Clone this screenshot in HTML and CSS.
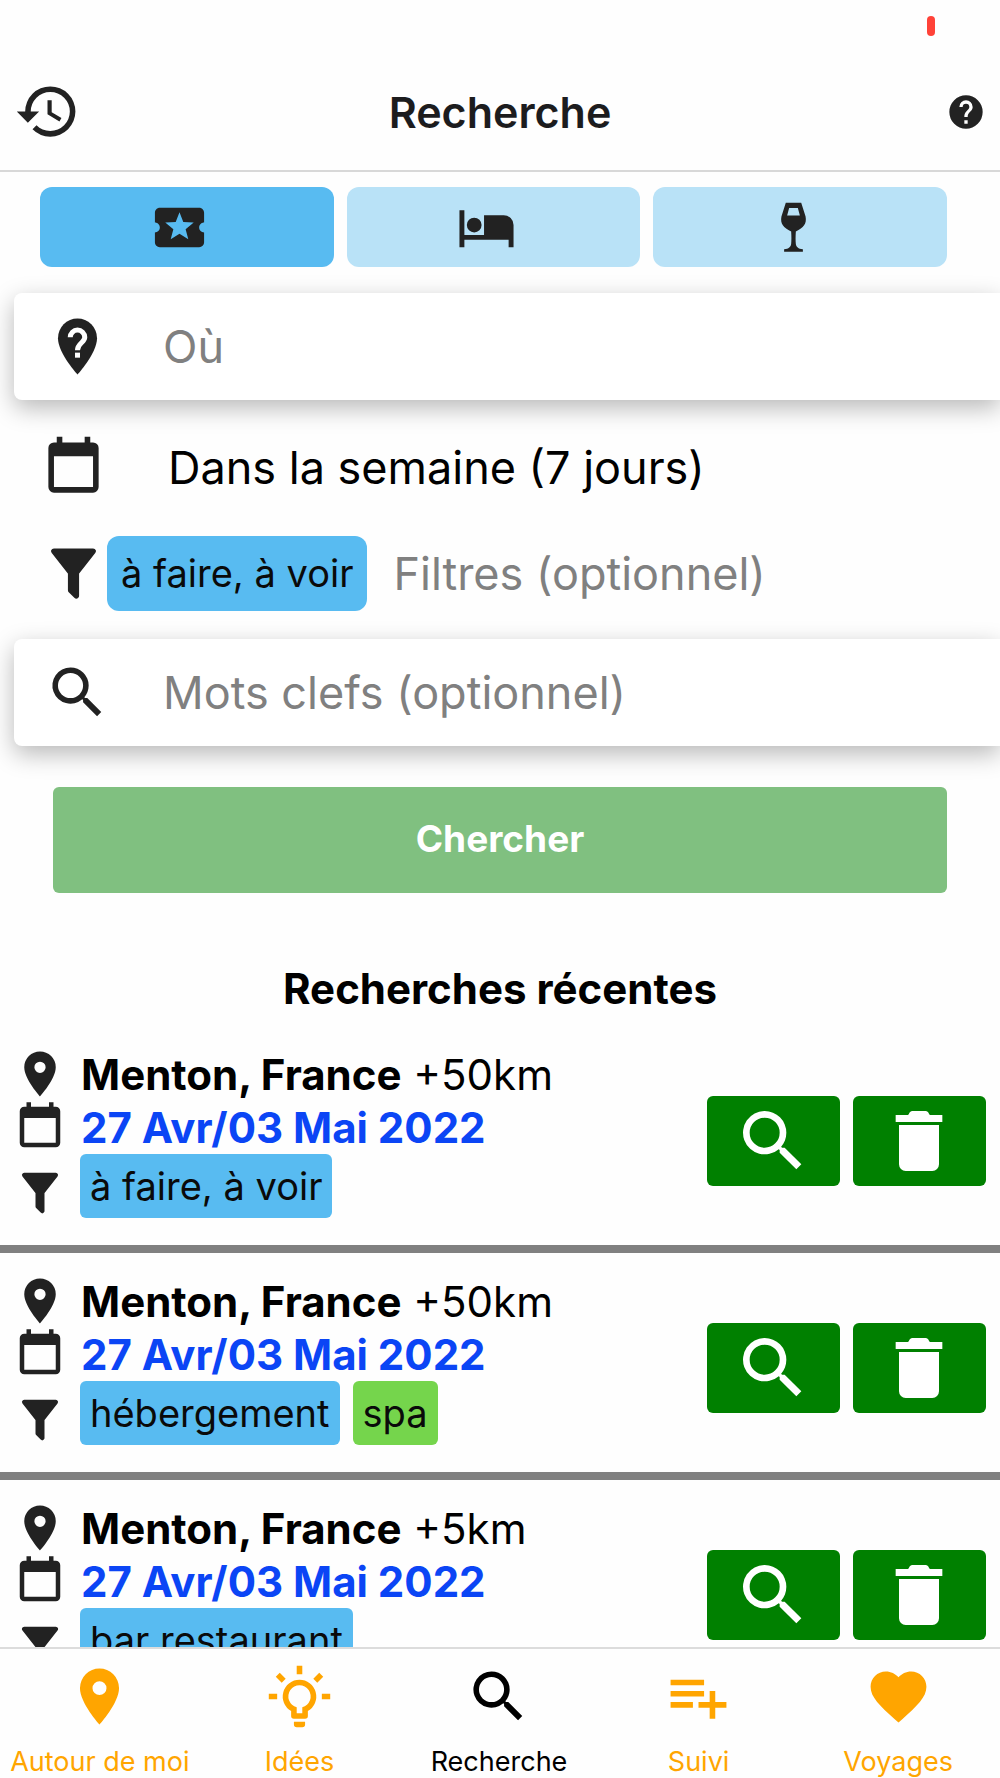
FILE: index.html
```html
<!DOCTYPE html>
<html lang="fr">
<head>
<meta charset="utf-8">
<meta name="viewport" content="width=device-width, initial-scale=1">
<title>Recherche</title>
<link rel="stylesheet" href="styles.css">
</head>
<body>
<svg class="sprite" aria-hidden="true">
  <symbol id="i-history" viewBox="0 0 24 24"><path d="M13.5 8H12v5l4.28 2.54.72-1.21-3.5-2.08V8M13 3a9 9 0 0 0-9 9H1l3.96 4.03L9 12H6a7 7 0 1 1 7 7c-1.93 0-3.68-.79-4.94-2.06l-1.42 1.42A8.9 8.9 0 0 0 13 21a9 9 0 0 0 0-18"/></symbol>
  <symbol id="i-help" viewBox="0 0 24 24"><path d="M12 2a10 10 0 1 0 0 20 10 10 0 0 0 0-20zm1 17h-2v-2h2v2zm2.07-7.75l-.9.92C13.45 12.9 13 13.5 13 15h-2v-.5c0-1.1.45-2.1 1.17-2.83l1.24-1.26c.37-.36.59-.86.59-1.41a2 2 0 0 0-4 0H8a4 4 0 0 1 8 0c0 .88-.36 1.68-.93 2.25z"/></symbol>
  <symbol id="i-ticket" viewBox="0 0 24 24"><path d="M20 12c0-1.1.9-2 2-2V6c0-1.1-.9-2-2-2H4c-1.1 0-2 .9-2 2v4c1.1 0 2 .9 2 2s-.9 2-2 2v4c0 1.1.9 2 2 2h16c1.1 0 2-.9 2-2v-4c-1.1 0-2-.9-2-2zm-4.42 4.8L12 14.5l-3.58 2.3 1.08-4.12-3.29-2.69 4.24-.25L12 5.8l1.54 3.95 4.24.25-3.29 2.69 1.09 4.11z"/></symbol>
  <symbol id="i-bed" viewBox="0 0 24 24"><path d="M19 7h-8v8H3V5H1v15h2v-3h18v3h2v-9a4 4 0 0 0-4-4M7 14a3 3 0 1 0 0-6 3 3 0 0 0 0 6"/></symbol>
  <symbol id="i-wine" viewBox="0 0 176 176"><path fill-rule="evenodd" d="M65 14h46l13 41c4 22-6 33-29 45-1 16-1 26 0 37 1 9 7 14 21 16v7H60v-7c14-2 20-7 21-16 1-11 1-21 0-37-23-12-33-23-29-45zM75 30l-6 22h38l-6-22z"/></symbol>
  <symbol id="i-pin-help" viewBox="0 0 24 24"><path d="M12 2a7 7 0 0 0-7 7c0 5.3 7 13 7 13s7-7.7 7-13a7 7 0 0 0-7-7z"/><path class="knock-line" d="M9.4 8.7a2.6 2.6 0 1 1 5.2 0c0 1.9-2.6 2.1-2.6 4.6"/><path class="knock" d="M11.1 14.2h1.8V16h-1.8z"/></symbol>
  <symbol id="i-pin" viewBox="0 0 24 24"><path d="M12 11.5a2.5 2.5 0 1 1 0-5 2.5 2.5 0 0 1 0 5M12 2a7 7 0 0 0-7 7c0 5.25 7 13 7 13s7-7.75 7-13a7 7 0 0 0-7-7z"/></symbol>
  <symbol id="i-calendar" viewBox="0 0 24 24"><path d="M19 19H5V8h14m-3-7v2H8V1H6v2H5a2 2 0 0 0-2 2v14a2 2 0 0 0 2 2h14a2 2 0 0 0 2-2V5a2 2 0 0 0-2-2h-1V1"/></symbol>
  <symbol id="i-filter" viewBox="0 0 24 24"><path d="M14 12v7.88c.04.3-.06.62-.29.83a1 1 0 0 1-1.41 0l-2.01-2.01a.99.99 0 0 1-.29-.83V12h-.03L4.21 4.62a1 1 0 0 1 .17-1.4c.19-.14.4-.22.62-.22h14c.22 0 .43.08.62.22a1 1 0 0 1 .17 1.4L14.03 12z"/></symbol>
  <symbol id="i-search" viewBox="0 0 24 24"><path d="M9.5 3A6.5 6.5 0 0 1 16 9.5c0 1.61-.59 3.09-1.56 4.23l.27.27h.79l5 5-1.5 1.5-5-5v-.79l-.27-.27A6.5 6.5 0 1 1 9.5 3m0 2a4.5 4.5 0 1 0 0 9 4.5 4.5 0 0 0 0-9z"/></symbol>
  <symbol id="i-trash" viewBox="0 0 24 24"><path d="M19 4.2h-3.6c-.5 0-.4-1.2-1.4-1.2h-4c-1 0-.9 1.2-1.4 1.2H5v2.1h14M6 7.2V19a2 2 0 0 0 2 2h8a2 2 0 0 0 2-2V7.2z"/></symbol>
  <symbol id="i-bulb" viewBox="0 0 24 24"><path d="M20 11h3v2h-3zM1 11h3v2H1zM13 1v3h-2V1zM4.92 3.5l2.13 2.14-1.42 1.41L3.5 4.93zM16.95 5.63l2.12-2.13 1.43 1.43-2.13 2.12zM12 6a6 6 0 0 1 3 11.2V19a1 1 0 0 1-1 1h-4a1 1 0 0 1-1-1v-1.8A6 6 0 0 1 12 6m2 15v1a1 1 0 0 1-1 1h-2a1 1 0 0 1-1-1v-1zm-3-3h2v-2.13a4 4 0 1 0-2 0z"/></symbol>
  <symbol id="i-list-add" viewBox="0 0 24 24"><path d="M14 10H2v2h12zM14 6H2v2h12zM18 14v-4h-2v4h-4v2h4v4h2v-4h4v-2zM2 16h8v-2H2z"/></symbol>
  <symbol id="i-heart" viewBox="0 0 24 24"><path d="M12 21.35l-1.45-1.32C5.4 15.36 2 12.27 2 8.5 2 5.41 4.42 3 7.5 3c1.74 0 3.41.81 4.5 2.08C13.09 3.81 14.76 3 16.5 3 19.58 3 22 5.41 22 8.5c0 3.77-3.4 6.86-8.55 11.53z"/></symbol>
</svg>

<div class="status"><span class="status-battery"></span></div>

<header class="header">
  <button class="icon-button" type="button" aria-label="Historique"><svg class="icon icon-lg"><use href="#i-history"/></svg></button>
  <h1 class="title">Recherche</h1>
  <button class="icon-button" type="button" aria-label="Aide"><svg class="icon icon-sm"><use href="#i-help"/></svg></button>
</header>

<main class="content">
  <div class="kinds">
    <button class="kind kind-active" type="button" aria-label="À faire, à voir"><svg class="icon icon-kind"><use href="#i-ticket"/></svg></button>
    <button class="kind" type="button" aria-label="Hébergement"><svg class="icon icon-kind"><use href="#i-bed"/></svg></button>
    <button class="kind" type="button" aria-label="Bar restaurant"><svg class="icon icon-kind"><use href="#i-wine"/></svg></button>
  </div>

  <form class="form">
    <label class="field card">
      <svg class="icon icon-lg"><use href="#i-pin-help"/></svg>
      <input class="input" type="text" placeholder="Où" aria-label="Où">
    </label>
    <div class="field row">
      <svg class="icon icon-lg"><use href="#i-calendar"/></svg>
      <button class="date" type="button">Dans la semaine (7 jours)</button>
    </div>
    <label class="field row filters">
      <svg class="icon icon-lg"><use href="#i-filter"/></svg>
      <span class="tag tag-large">à faire, à voir</span>
      <input class="input" type="text" placeholder="Filtres (optionnel)" aria-label="Filtres">
    </label>
    <label class="field card">
      <svg class="icon icon-lg"><use href="#i-search"/></svg>
      <input class="input" type="text" placeholder="Mots clefs (optionnel)" aria-label="Mots clefs">
    </label>
    <button class="submit" type="submit">Chercher</button>
  </form>

  <h2 class="subtitle">Recherches récentes</h2>

  <ul class="recents">
    <li class="recent">
      <div class="details">
        <div class="line"><svg class="icon icon-md"><use href="#i-pin"/></svg><span class="text"><b>Menton, France</b> +50km</span></div>
        <div class="line"><svg class="icon icon-md"><use href="#i-calendar"/></svg><span class="text dates">27 Avr/03 Mai 2022</span></div>
        <div class="line line-tags"><svg class="icon icon-md"><use href="#i-filter"/></svg><span class="tags"><span class="tag">à faire, à voir</span></span></div>
      </div>
      <div class="actions">
        <button class="action" type="button" aria-label="Relancer"><svg class="icon icon-xl"><use href="#i-search"/></svg></button>
        <button class="action" type="button" aria-label="Supprimer"><svg class="icon icon-xl"><use href="#i-trash"/></svg></button>
      </div>
    </li>
    <li class="recent">
      <div class="details">
        <div class="line"><svg class="icon icon-md"><use href="#i-pin"/></svg><span class="text"><b>Menton, France</b> +50km</span></div>
        <div class="line"><svg class="icon icon-md"><use href="#i-calendar"/></svg><span class="text dates">27 Avr/03 Mai 2022</span></div>
        <div class="line line-tags"><svg class="icon icon-md"><use href="#i-filter"/></svg><span class="tags"><span class="tag">hébergement</span><span class="tag tag-green">spa</span></span></div>
      </div>
      <div class="actions">
        <button class="action" type="button" aria-label="Relancer"><svg class="icon icon-xl"><use href="#i-search"/></svg></button>
        <button class="action" type="button" aria-label="Supprimer"><svg class="icon icon-xl"><use href="#i-trash"/></svg></button>
      </div>
    </li>
    <li class="recent">
      <div class="details">
        <div class="line"><svg class="icon icon-md"><use href="#i-pin"/></svg><span class="text"><b>Menton, France</b> +5km</span></div>
        <div class="line"><svg class="icon icon-md"><use href="#i-calendar"/></svg><span class="text dates">27 Avr/03 Mai 2022</span></div>
        <div class="line line-tags"><svg class="icon icon-md"><use href="#i-filter"/></svg><span class="tags"><span class="tag">bar restaurant</span></span></div>
      </div>
      <div class="actions">
        <button class="action" type="button" aria-label="Relancer"><svg class="icon icon-xl"><use href="#i-search"/></svg></button>
        <button class="action" type="button" aria-label="Supprimer"><svg class="icon icon-xl"><use href="#i-trash"/></svg></button>
      </div>
    </li>
  </ul>
</main>

<nav class="nav">
  <a class="nav-item" href="#autour"><svg class="icon icon-lg"><use href="#i-pin"/></svg>Autour de moi</a>
  <a class="nav-item" href="#idees"><svg class="icon icon-lg"><use href="#i-bulb"/></svg>Idées</a>
  <a class="nav-item nav-current" href="#recherche" aria-current="page"><svg class="icon icon-lg"><use href="#i-search"/></svg>Recherche</a>
  <a class="nav-item" href="#suivi"><svg class="icon icon-lg"><use href="#i-list-add"/></svg>Suivi</a>
  <a class="nav-item" href="#voyages"><svg class="icon icon-lg"><use href="#i-heart"/></svg>Voyages</a>
</nav>
</body>
</html>
```
FILE: styles.css
```css
* {
  box-sizing: border-box;
}

body {
  margin: 0;
  height: 100vh;
  display: flex;
  flex-direction: column;
  background: #fefefe;
  color: #000;
  font-family: Inter, "Liberation Sans", sans-serif;
  font-size: 42px;
  overflow: hidden;
}

button,
input {
  margin: 0;
  padding: 0;
  border: 0;
  background: none;
  color: inherit;
  font: inherit;
}

.sprite {
  position: absolute;
  width: 0;
  height: 0;
}

.icon {
  display: block;
  flex: none;
  fill: #222;
}

.icon-sm { width: 40px; height: 40px; }
.icon-md { width: 54px; height: 54px; }
.icon-kind { width: 59px; height: 59px; }
.icon-lg { width: 67px; height: 67px; }
.icon-xl { width: 80px; height: 80px; fill: #fff; }

.knock { fill: #fff; }
.knock-line { fill: none; stroke: #fff; stroke-width: 1.8; }

.status {
  flex: none;
  display: flex;
  justify-content: flex-end;
  height: 53px;
  padding: 16px 65px 0 0;
}

.status-battery {
  width: 8px;
  height: 20px;
  border-radius: 4px;
  background: #ff4238;
}

.header {
  flex: none;
  display: grid;
  grid-template-columns: 1fr auto 1fr;
  align-items: center;
  height: 119px;
  padding: 0 14px;
  border-bottom: 2px solid #d8d8d8;
}

.icon-button {
  justify-self: start;
}

.icon-button:last-child {
  justify-self: end;
}

.title {
  margin: 0;
  color: #1c1c1e;
  font-size: 43px;
  font-weight: 600;
}

.content {
  flex: 1;
  min-height: 0;
  overflow: hidden;
}

.kinds {
  display: grid;
  grid-template-columns: repeat(3, 1fr);
  gap: 13px;
  padding: 15px 53px 26px 40px;
}

.kind {
  display: flex;
  align-items: center;
  justify-content: center;
  height: 80px;
  padding-right: 14px;
  border-radius: 12px;
  background: #b9e2f7;
}

.kind-active {
  background: #58bbf1;
}

.form {
  display: flex;
  flex-direction: column;
}

.field {
  display: flex;
  align-items: center;
}

.card {
  height: 107px;
  margin-left: 14px;
  padding-left: 30px;
  gap: 52px;
  border-radius: 8px 0 0 8px;
  background: #fff;
  box-shadow: 0 8px 24px rgba(0, 0, 0, 0.28);
}

.row {
  height: 134px;
  padding-left: 40px;
  gap: 61px;
}

.filters {
  height: 105px;
  gap: 0;
  padding-bottom: 26px;
}

.input {
  flex: 1;
  min-width: 0;
  font-size: 45px;
}

.input::placeholder {
  color: #808080;
  opacity: 1;
}

.filters .input {
  margin-left: 26px;
}

.date {
  font-size: 45px;
}

.tag {
  padding: 0 10px;
  border-radius: 6px;
  background: #58bbf1;
  color: #0a0a0a;
  font-size: 38px;
  line-height: 64px;
}

.tag-large {
  padding: 0 14px;
  border-radius: 12px;
  line-height: 75px;
}

.tag-green {
  background: #75d54c;
}

.submit {
  height: 106px;
  margin: 41px 53px 0;
  padding-bottom: 3px;
  border-radius: 6px;
  background: #80c080;
  color: #fff;
  font-size: 37px;
  font-weight: 700;
}

.subtitle {
  margin: 69px 0 10px;
  font-size: 42px;
  font-weight: 700;
  line-height: 54px;
  text-align: center;
}

.recents {
  margin: 0;
  padding: 0;
  list-style: none;
}

.recent {
  display: flex;
  align-items: center;
  justify-content: space-between;
  height: 227px;
  padding: 0 14px 0 13px;
  border-bottom: 8px solid #808080;
}

.details {
  padding-bottom: 4px;
}

.line {
  display: flex;
  align-items: center;
  gap: 13px;
  height: 53px;
}

.line-tags {
  align-items: flex-end;
  height: 66px;
}

.text {
  padding-left: 1px;
}

.text b,
.dates {
  font-weight: 700;
}

.dates {
  color: #0b45f5;
}

.tags {
  display: flex;
  align-self: flex-start;
  gap: 13px;
}

.actions {
  display: flex;
  gap: 13px;
  padding-top: 10px;
}

.action {
  display: flex;
  align-items: center;
  justify-content: center;
  width: 133px;
  height: 90px;
  padding-right: 2px;
  border-radius: 6px;
  background: #008000;
}

.nav {
  flex: none;
  display: grid;
  grid-template-columns: repeat(5, 1fr);
  height: 131px;
  padding-right: 2px;
  border-top: 2px solid #dcdcdc;
}

.nav-item {
  display: flex;
  flex-direction: column;
  align-items: center;
  gap: 16px;
  padding-top: 14px;
  color: #ffa500;
  font-size: 27px;
  line-height: 32px;
  text-decoration: none;
  white-space: nowrap;
}

.nav-item .icon {
  fill: currentColor;
}

.nav-current {
  color: #000;
}
```
